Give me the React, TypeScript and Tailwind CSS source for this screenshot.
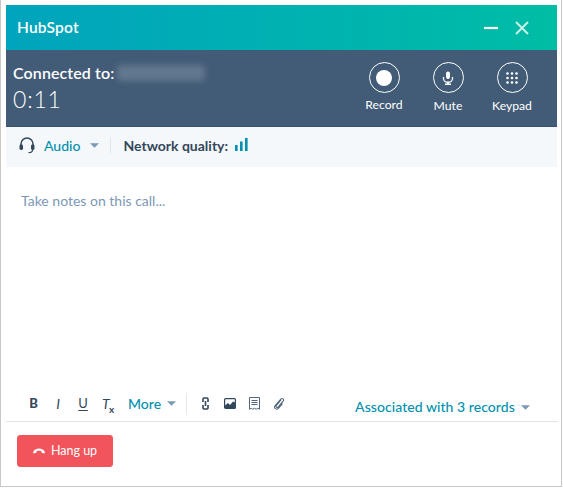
import React from "react";

const Caret = () => (
  <svg width="9" height="5" viewBox="0 0 10 5" className="shrink-0"><path d="M0 0h10L5 5z" fill="#7c98b6" /></svg>
);

const Round = ({ label, children, up }: { label: string; children: React.ReactNode; up?: boolean }) => (
  <div className="flex w-[64px] flex-col items-center">
    <div className="flex h-[31px] w-[31px] items-center justify-center rounded-full border border-white">{children}</div>
    <div className={`text-[12.2px] leading-[16px] text-white ${up ? "mt-[4px]" : "mt-[5px]"}`}>{label}</div>
  </div>
);

const ink = "#33475b";

export default function App() {
  return (
    <div className="h-[488px] w-[563px] bg-white font-['Lato','Noto_Sans',sans-serif]">
      <div className="flex h-[487px] w-[562px] flex-col border-x border-b border-[#c9c9c9] pl-[5px] pr-[4px] pt-[5px]">
        <div className="flex h-[45px] shrink-0 items-center justify-between bg-gradient-to-r from-[#00a4bd] to-[#00bda5] pl-[11px] pr-[28px]">
          <div className="text-[15.5px] font-semibold tracking-[0.2px] text-white">HubSpot</div>
          <div className="flex items-center gap-[17px]">
            <svg width="14" height="14" viewBox="0 0 14 14"><path d="M0 7h14" stroke="#fff" strokeWidth="2.2" /></svg>
            <svg width="14" height="14" viewBox="0 0 14 14"><path d="M1 1l12 12M13 1L1 13" stroke="#c5efe9" strokeWidth="2" /></svg>
          </div>
        </div>

        <div className="flex h-[77px] shrink-0 justify-between border-b border-[#3b5068] bg-[#425b76] pl-[7px] pr-[13px]">
          <div className="pt-[13px] text-white">
            <div className="flex items-center">
              <span className="text-[16px] font-semibold leading-[20px] tracking-[0.1px]">Connected to:</span>
              <div className="ml-[3px] h-[16px] w-[88px] rounded-sm bg-[#62788f] blur-[3px]" />
            </div>
            <div className="mt-[3px] text-[23px] font-light leading-[26px] tracking-[0.8px] text-white">0:11</div>
          </div>
          <div className="flex pt-[12px]">
            <Round label="Record" up>
              <div className="h-[16px] w-[16px] rounded-full bg-white" />
            </Round>
            <Round label="Mute">
              <svg width="12" height="14" viewBox="0 0 12 14" fill="none">
                <rect x="4" y="0.5" width="4" height="7.5" rx="2" fill="#fff" />
                <path d="M1.5 6v1.5a3.5 3 0 0 0 9 0V6" stroke="#fff" strokeWidth="1.3" />
                <path d="M6 10.5V13M3 13.3h6" stroke="#fff" strokeWidth="1.4" />
              </svg>
            </Round>
            <Round label="Keypad">
              <svg width="12" height="12" viewBox="0 0 12 12" fill="#fff">
                {[1.5, 6, 10.5].flatMap((y) => [1.5, 6, 10.5].map((x) => <circle key={`${x}-${y}`} cx={x} cy={y} r="1.3" />))}
              </svg>
            </Round>
          </div>
        </div>

        <div className="flex h-[40px] shrink-0 items-center bg-[#f5f8fa] pb-[4px] pl-[13px]">
          <svg width="16" height="17" viewBox="0 0 16 17" fill="none">
            <path d="M2 9V7a6 6 0 0 1 12 0v2" stroke={ink} strokeWidth="1.5" />
            <rect x="0.5" y="7.5" width="3.5" height="5.5" rx="1.4" fill={ink} />
            <rect x="12" y="7.5" width="3.5" height="5.5" rx="1.4" fill={ink} />
            <path d="M13.5 13c0 1.8-1.5 2.7-4 2.7" stroke={ink} strokeWidth="1.2" />
          </svg>
          <span className="ml-[9px] text-[14px] font-medium text-[#0091ae]">Audio</span>
          <span className="ml-[10px] mt-[1px]"><Caret /></span>
          <div className="ml-[11px] h-[16px] w-px bg-[#dfe3eb]" />
          <span className="ml-[12px] text-[14px] font-bold text-[#33475b]">Network quality:</span>
          <svg className="ml-[7px] mb-[1px]" width="14" height="14" viewBox="0 0 14 14" fill="#0091ae">
            <rect x="0" y="7" width="2.6" height="6" />
            <rect x="5" y="3.5" width="2.6" height="9.5" />
            <rect x="10" y="0" width="2.6" height="13" />
          </svg>
        </div>

        <div className="flex flex-1 flex-col bg-white">
          <div className="flex-1 pl-[15px] pt-[24px] text-[14px] leading-[20px] text-[#7c98b6]">Take notes on this call...</div>
          <div className="flex h-[37px] shrink-0 items-center pl-[22px] pt-[2px] text-[#33475b]">
            <span className="w-[11px] text-center text-[13px] font-black">B</span>
            <span className="ml-[14px] w-[10px] text-center text-[14px] italic">I</span>
            <span className="ml-[15px] w-[10px] text-center text-[13px] underline underline-offset-2">U</span>
            <span className="relative ml-[14px] w-[14px] text-[14px] italic leading-none">
              T<span className="absolute left-[7px] top-[7px] text-[10px] font-bold not-italic">x</span>
            </span>
            <span className="ml-[12px] text-[14px] font-medium text-[#0091ae]">More</span>
            <span className="ml-[6px]"><Caret /></span>
            <div className="ml-[10px] h-[22px] w-px bg-[#e5eaf0]" />
            <svg className="ml-[15px]" width="7" height="13" viewBox="0 0 7 13" fill="none" stroke={ink} strokeWidth="1.6">
              <path d="M1 5V2a1 1 0 0 1 1-1h3a1 1 0 0 1 1 1v3M1 8v3a1 1 0 0 0 1 1h3a1 1 0 0 0 1-1V8" />
              <path d="M3.500 4v5" />
            </svg>
            <svg className="ml-[15px]" width="12" height="11" viewBox="0 0 12 11">
              <rect x="0.6" y="0.6" width="10.8" height="9.8" rx="1" fill="none" stroke={ink} strokeWidth="1.2" />
              <path d="M1 10V7.5l3-2.5 2 2 3-3.5 2 1V10z" fill={ink} />
            </svg>
            <svg className="ml-[13px]" width="11" height="13" viewBox="0 0 11 13" fill="none" stroke="#51667d" strokeWidth="1">
              <path d="M.5.5h10v11.7l-1.7-.9-1.6.9-1.7-.9-1.7.9-1.6-.9-1.7.9z" />
              <path d="M2.5 3.500h6M2.500 5.500h6M2.500 7.500h6" />
            </svg>
            <svg className="ml-[13px]" width="12" height="13" viewBox="0 0 12 13" fill="none" stroke="#51667d" strokeWidth="1.1">
              <path d="M8 3 3.2 8.6c-.9 1.1 1 2.6 1.9 1.5l5-6C11.400 2.500 9.500.6 8 2L2 8.800c-1.700 2.100 1.600 4.600 3.300 2.600L9.500 6.600" />
            </svg>
            <span className="ml-[70px] mt-[6px] text-[14px] font-medium tracking-[0.05px] text-[#0091ae]">Associated with 3 records</span>
            <span className="ml-[6px] mt-[7px]"><Caret /></span>
          </div>
          <div className="mr-[-1px] h-px shrink-0 bg-[#dfe3eb]" />
          <div className="h-[64px] shrink-0 pl-[11px] pt-[13px]">
            <button className="flex h-[32px] w-[96px] items-center justify-center gap-[6px] rounded-[3px] border border-[#f2545b] bg-[#f2545b] text-[12.5px] text-white">
              <svg width="12" height="6" viewBox="0 0 12 6"><path d="M0 4.500C1 1.500 3.500.5 6 .5s5 1 6 4L11.500 5.500 8.500 4.800V3.200C7 2.700 5 2.700 3.500 3.200v1.600L.5 5.500z" fill="#fff" /></svg>
              Hang up
            </button>
          </div>
        </div>
      </div>
    </div>
  );
}
